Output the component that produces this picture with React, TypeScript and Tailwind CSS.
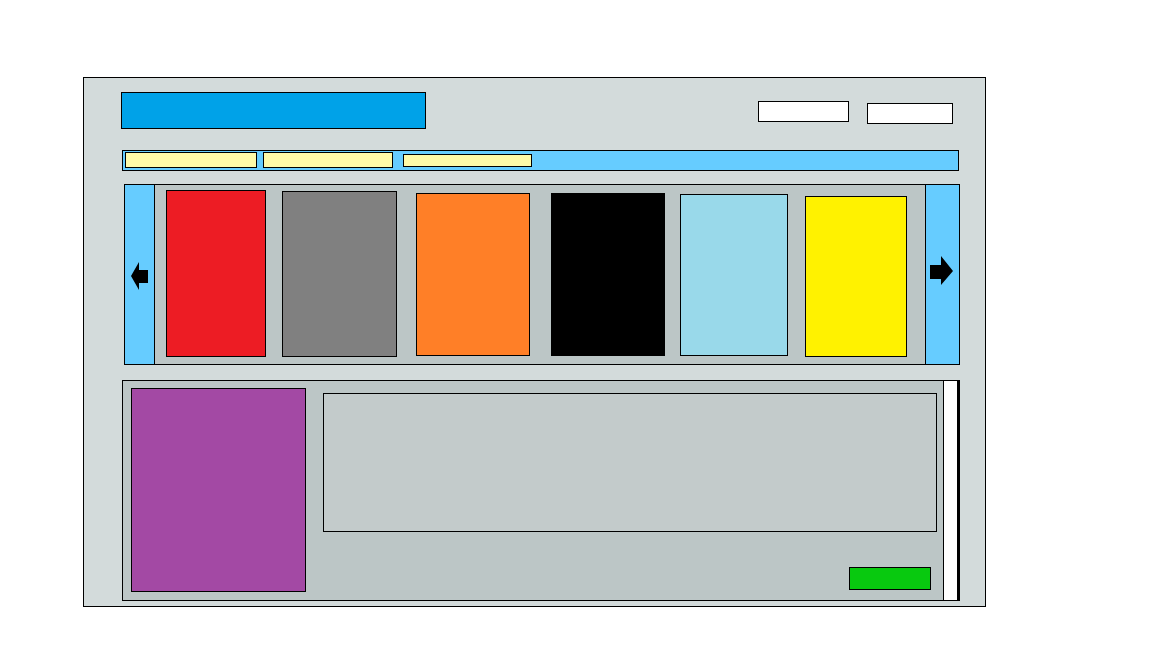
import React from 'react';

const cards = [
  { color: 'bg-[#ed1c24]', cls: 'ml-[11px] mt-[5px] w-[100px] h-[167px]' },
  { color: 'bg-[#808080]', cls: 'ml-[16px] mt-[6px] w-[115px] h-[166px]' },
  { color: 'bg-[#ff7f27]', cls: 'ml-[19px] mt-[8px] w-[114px] h-[163px]' },
  { color: 'bg-[#000000]', cls: 'ml-[21px] mt-[8px] w-[114px] h-[163px]' },
  { color: 'bg-[#99d9ea]', cls: 'ml-[15px] mt-[9px] w-[108px] h-[162px]' },
  { color: 'bg-[#fff200]', cls: 'ml-[17px] mt-[11px] w-[102px] h-[161px]' },
];

function ArrowLeft() {
  return (
    <svg width="18" height="30" viewBox="0 0 18 30">
      <path d="M0 14 L8 0 L8 8 L17 8 L17 21 L8 21 L8 28 Z" fill="#000" />
    </svg>
  );
}

function ArrowRight() {
  return (
    <svg width="24" height="30" viewBox="0 0 24 30">
      <path d="M0 9 L11 9 L11 0 L23 15 L11 29 L11 23 L0 23 Z" fill="#000" />
    </svg>
  );
}

export default function App() {
  return (
    <div className="w-[1152px] h-[648px] bg-white overflow-hidden" style={{ fontFamily: '"Liberation Sans", sans-serif' }}>
      <div className="ml-[83px] mt-[77px] w-[903px] h-[530px] border border-black bg-[#d3dbdb] flex flex-col">
        {/* header */}
        <div className="flex items-start">
          <div className="ml-[37px] mt-[14px] w-[305px] h-[37px] bg-[#00a2e8] border border-black" />
          <div className="ml-[332px] mt-[23px] w-[91px] h-[21px] bg-white border border-black" />
          <div className="ml-[18px] mt-[25px] w-[86px] h-[21px] bg-white border border-black" />
        </div>

        {/* nav */}
        <div className="ml-[38px] mt-[21px] w-[837px] h-[21px] bg-[#66ccff] border border-black flex items-start">
          <div className="ml-[2px] mt-[1px] w-[132px] h-[16px] bg-[#fffaa8] border border-black" />
          <div className="ml-[6px] mt-[1px] w-[130px] h-[16px] bg-[#fffaa8] border border-black" />
          <div className="ml-[10px] mt-[3px] w-[129px] h-[13px] bg-[#fffaa8] border border-black" />
        </div>

        {/* carousel */}
        <div className="ml-[40px] mt-[13px] w-[836px] h-[181px] bg-[#bcc6c6] border border-black flex items-stretch">
          <div className="w-[30px] bg-[#66ccff] border-r border-black flex items-center justify-start pl-[6px] pt-[5px]">
            <ArrowLeft />
          </div>
          {cards.map((c, i) => (
            <div key={i} className={`${c.color} ${c.cls} border border-black self-start shrink-0`} />
          ))}
          <div className="ml-auto w-[34px] bg-[#66ccff] border-l border-black flex items-center pl-[4px] pb-[8px]">
            <ArrowRight />
          </div>
        </div>

        {/* detail panel */}
        <div className="ml-[38px] mt-[15px] w-[838px] h-[221px] bg-[#bcc6c6] border border-black flex items-stretch">
          <div className="ml-[8px] mt-[7px] w-[175px] h-[204px] bg-[#a349a4] border border-black shrink-0" />
          <div className="ml-[17px] flex flex-col w-[614px]">
            <div className="mt-[12px] w-[614px] h-[139px] bg-[#c3cbcb] border border-black" />
            <div className="ml-[526px] mt-[35px] w-[82px] h-[23px] bg-[#08c90f] border border-black" />
          </div>
          <div className="ml-auto w-[16px] bg-white border-l border-r-2 border-black" />
        </div>
      </div>
    </div>
  );
}
